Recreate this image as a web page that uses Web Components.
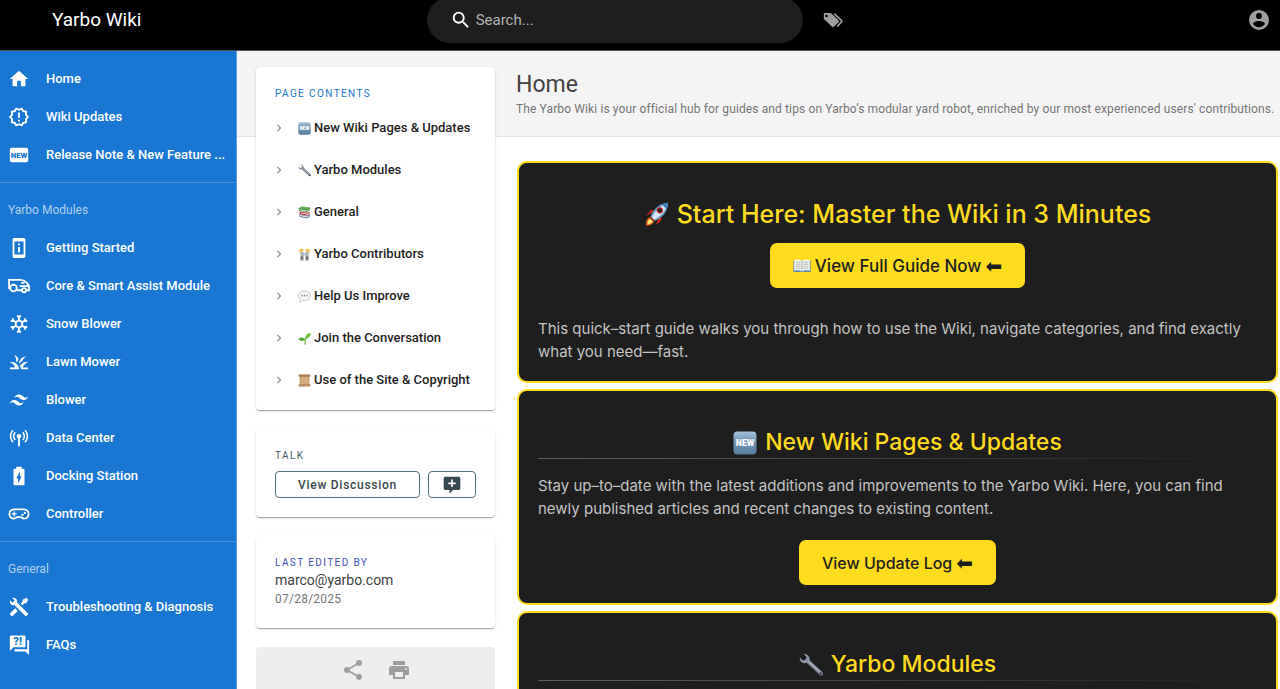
<!DOCTYPE html>
<html lang="en">
<head>
<meta charset="utf-8">
<title>Home | Yarbo Wiki</title>
<meta name="viewport" content="width=device-width, initial-scale=1">
<style>
  body { margin: 0; font-family: Roboto, "Liberation Sans", sans-serif; }
</style>
</head>
<body>
<wiki-app></wiki-app>

<script>
const ICONS = {
  home: '<path d="M10,20V14H14V20H19V12H22L12,3L2,12H5V20H10Z"/>',
  alert: '<path fill-rule="evenodd" d="M23,12L20.56,14.78L20.9,18.46L17.29,19.28L15.4,22.46L12,21L8.6,22.47L6.71,19.29L3.1,18.47L3.44,14.78L1,12L3.44,9.21L3.1,5.53L6.71,4.72L8.6,1.54L12,3L15.4,1.54L17.29,4.72L20.9,5.54L20.56,9.22L23,12M20.33,12L18.5,9.89L18.74,7.1L16,6.5L14.58,4.07L12,5.18L9.42,4.07L8,6.5L5.26,7.09L5.5,9.88L3.67,12L5.5,14.1L5.26,16.9L8,17.5L9.42,19.93L12,18.81L14.58,19.92L16,17.5L18.74,16.89L18.5,14.1L20.33,12M11,15H13V17H11V15M11,7H13V13H11V7"/>',
  news: '<rect x="2" y="4" width="20" height="16" rx="2"/><text x="12" y="15.2" text-anchor="middle" font-family="Roboto" font-weight="900" font-size="8.5" fill="#1976d2">NEW</text>',
  phone: '<path fill-rule="evenodd" d="M17,19V5H7V19H17M17,1A2,2 0 0,1 19,3V21A2,2 0 0,1 17,23H7C5.89,23 5,22.1 5,21V3C5,1.89 5.89,1 7,1H17M11,7H13V9H11V7M11,11H13V17H11V11Z"/>',
  van: '<g fill="none" stroke="currentColor" stroke-width="2"><path d="M1.2 15.5V5.4H13.5C18.5 5.4 23 10 23 13.6V16.6H20.5M9.5 16.6H14.6"/><circle cx="6" cy="14.2" r="3.6"/><circle cx="17.5" cy="16.6" r="2.2"/><path d="M12.6 12.2H22.6M14.5 8.6H18" stroke-width="1.8"/></g>',
  snow: '<path fill-rule="evenodd" d="M20.79,13.95L18.46,14.57L16.46,13.44V10.56L18.46,9.43L20.79,10.05L21.31,8.12L19.54,7.65L20,5.88L18.07,5.36L17.45,7.69L15.45,8.82L13,7.38V5.12L14.71,3.41L13.29,2L12,3.29L10.71,2L9.29,3.41L11,5.12V7.38L8.5,8.82L6.5,7.69L5.92,5.36L4,5.88L4.47,7.65L2.7,8.12L3.22,10.05L5.55,9.43L7.55,10.56V13.45L5.55,14.58L3.22,13.96L2.7,15.89L4.47,16.36L4,18.12L5.93,18.64L6.55,16.31L8.55,15.18L11,16.62V18.88L9.29,20.59L10.71,22L12,20.71L13.29,22L14.7,20.59L13,18.88V16.62L15.5,15.17L17.5,16.3L18.12,18.63L20,18.12L19.53,16.35L21.3,15.88L20.79,13.95M9.5,10.56L12,9.11L14.5,10.56V13.44L12,14.89L9.5,13.44V10.56Z"/>',
  grass: '<path d="M12,20H2V18H7.75C7,15.19 4.81,12.99 2,12.26C2.64,12.1 3.31,12 4,12C8.42,12 12,15.58 12,20M22,12.26C21.36,12.1 20.69,12 20,12C17.07,12 14.5,13.58 13.12,15.93C13.41,16.59 13.65,17.28 13.79,18C13.92,18.65 14,19.32 14,20H22V18H16.24C17,15.19 19.19,12.99 22,12.26M15.64,11C16.42,8.93 17.87,7.18 19.73,6C15.44,6.16 12,9.67 12,14C12.95,12.75 14.2,11.72 15.64,11M11.42,8.85C10.58,6.66 8.88,4.89 6.7,4C8.14,5.86 9,8.18 9,10.71C9,10.92 8.97,11.12 8.96,11.32C9.39,11.56 9.79,11.84 10.18,12.14C10.39,10.96 10.83,9.85 11.42,8.85Z"/>',
  wind: '<path d="M12,6C9.33,6 7.67,7.33 7,10C8,8.67 9.17,8.17 10.5,8.5C11.26,8.69 11.81,9.24 12.41,9.85C13.39,10.85 14.5,12 17,12C19.67,12 21.33,10.67 22,8C21,9.33 19.83,9.83 18.5,9.5C17.74,9.31 17.2,8.76 16.59,8.15C15.61,7.15 14.5,6 12,6M7,12C4.33,12 2.67,13.33 2,16C3,14.67 4.17,14.17 5.5,14.5C6.26,14.69 6.8,15.24 7.41,15.85C8.39,16.85 9.5,18 12,18C14.67,18 16.33,16.67 17,14C16,15.33 14.83,15.83 13.5,15.5C12.74,15.31 12.2,14.76 11.59,14.15C10.61,13.15 9.5,12 7,12Z"/>',
  antenna: '<path d="M12 7.5C12.69 7.5 13.27 7.73 13.76 8.2S14.5 9.27 14.5 10C14.5 11.05 14 11.81 13 12.28V21H11V12.28C10 11.81 9.5 11.05 9.5 10C9.5 9.27 9.76 8.67 10.24 8.2S11.31 7.5 12 7.5M16.69 5.3C17.94 6.55 18.61 8.11 18.7 10C18.7 11.8 18.03 13.38 16.69 14.72L15.5 13.5C16.5 12.59 17 11.42 17 10C17 8.67 16.5 7.5 15.5 6.5L16.69 5.3M6.09 4.08C4.5 5.67 3.7 7.64 3.7 10S4.5 14.3 6.09 15.89L4.92 17.11C3 15.08 2 12.7 2 10C2 7.3 3 4.94 4.92 2.91L6.09 4.08M19.08 2.91C21 4.94 22 7.3 22 10C22 12.8 21 15.17 19.08 17.11L17.91 15.89C19.5 14.3 20.3 12.33 20.3 10S19.5 5.67 17.91 4.08L19.08 2.91M7.31 5.3L8.5 6.5C7.5 7.42 7 8.58 7 10C7 11.33 7.5 12.5 8.5 13.5L7.31 14.72C5.97 13.38 5.3 11.8 5.3 10C5.3 8.2 5.97 6.64 7.31 5.3Z"/>',
  battery: '<path fill-rule="evenodd" d="M16.67,4H15V2H9V4H7.33A1.33,1.33 0 0,0 6,5.33V20.66C6,21.4 6.6,22 7.33,22H16.67A1.33,1.33 0 0,0 18,20.67V5.33C18,4.6 17.4,4 16.67,4M11,20V14.5H9L13,7V12.5H15Z"/>',
  pad: '<path d="M6.5 7H17.5A5 5 0 0 1 17.5 17C15.8 17 15.3 15.4 13.8 15.4H10.2C8.7 15.4 8.2 17 6.5 17A5 5 0 0 1 6.5 7Z" fill="none" stroke="currentColor" stroke-width="2"/><path d="M6 9.3H7.4V11.2H9.3V12.6H7.4V14.5H6V12.6H4.1V11.2H6Z"/><circle cx="18.3" cy="10.8" r="1.2"/><circle cx="15.8" cy="13" r="1.2"/>',
  tools: '<path d="M21.71 20.29L20.29 21.71A1 1 0 0 1 18.88 21.71L7 9.85A3.81 3.81 0 0 1 6 10A4 4 0 0 1 2.22 4.7L4.76 7.24L5.29 6.71L6.71 5.29L7.24 4.76L4.7 2.22A4 4 0 0 1 10 6A3.81 3.81 0 0 1 9.85 7L21.71 18.88A1 1 0 0 1 21.71 20.29M2.29 18.88A1 1 0 0 0 2.29 20.29L3.71 21.71A1 1 0 0 0 5.12 21.71L10.59 16.25L7.76 13.42M20 2L16 4V6L13.83 8.17L15.83 10.17L18 8H20L22 4Z"/>',
  faq: '<path d="M3 1.5H18A1 1 0 0 1 19 2.5V13.5A1 1 0 0 1 18 14.5H6L2 18.5V2.5A1 1 0 0 1 3 1.5M21 6.5H22A1 1 0 0 1 23 7.5V23L19 19H8A1 1 0 0 1 7 18V16.5H21Z"/><text x="10.5" y="12.2" text-anchor="middle" font-family="Roboto" font-weight="900" font-size="12" fill="#1976d2">?!</text>',
  search: '<path fill-rule="evenodd" d="M9.5,3A6.5,6.5 0 0,1 16,9.5C16,11.11 15.41,12.59 14.44,13.73L14.71,14H15.5L20.5,19L19,20.5L14,15.5V14.71L13.73,14.44C12.59,15.41 11.11,16 9.5,16A6.5,6.5 0 0,1 3,9.5A6.5,6.5 0 0,1 9.5,3M9.5,5C7,5 5,7 5,9.5C5,12 7,14 9.5,14C12,14 14,12 14,9.5C14,7 12,5 9.5,5Z"/>',
  tags: '<path fill-rule="evenodd" d="M2 3.5H8.6A2 2 0 0 1 10 4.1L18.4 12.1A2 2 0 0 1 18.4 14.9L13.4 19.9A2 2 0 0 1 10.6 19.9L1.6 11.5A2 2 0 0 1 1 10V4.5A1 1 0 0 1 2 3.5M4.3 5.6A1.6 1.6 0 1 0 4.3 8.8A1.6 1.6 0 1 0 4.3 5.6"/><path d="M13.5 4.4L22 12.4A1.6 1.6 0 0 1 22 14.6L17 19.8" fill="none" stroke="currentColor" stroke-width="2"/>',
  account: '<path fill-rule="evenodd" d="M12 2A10 10 0 1 0 12 22A10 10 0 1 0 12 2M12 5A3 3 0 1 1 12 11A3 3 0 1 1 12 5M12 12.9C14.5 12.9 18 14 18 16C16.7 17.9 14.5 19.2 12 19.2S7.3 17.9 6 16C6 14 9.5 12.9 12 12.9"/>',
  chevron: '<path d="M8.59,16.58L13.17,12L8.59,7.41L10,6L16,12L10,18L8.59,16.58Z"/>',
  comment: '<path fill-rule="evenodd" d="M4 2H20A2 2 0 0 1 22 4V16A2 2 0 0 1 20 18H13L9 22.4V18H4A2 2 0 0 1 2 16V4A2 2 0 0 1 4 2M11 5.5V9H7.5V11H11V14.5H13V11H16.5V9H13V5.5Z"/>',
  share: '<path d="M18,16.08C17.24,16.08 16.56,16.38 16.04,16.85L8.91,12.7C8.96,12.47 9,12.24 9,12C9,11.76 8.96,11.53 8.91,11.3L15.96,7.19C16.5,7.69 17.21,8 18,8A3,3 0 0,0 21,5A3,3 0 0,0 18,2A3,3 0 0,0 15,5C15,5.24 15.04,5.47 15.09,5.7L8.04,9.81C7.5,9.31 6.79,9 6,9A3,3 0 0,0 3,12A3,3 0 0,0 6,15C6.79,15 7.5,14.69 8.04,14.19L15.16,18.34C15.11,18.55 15.08,18.77 15.08,19C15.08,20.61 16.39,21.91 18,21.91C19.61,21.91 20.92,20.61 20.92,19A2.92,2.92 0 0,0 18,16.08Z"/>',
  print: '<path fill-rule="evenodd" d="M18,3H6V7H18M19,12A1,1 0 0,1 18,11A1,1 0 0,1 19,10A1,1 0 0,1 20,11A1,1 0 0,1 19,12M16,19H8V14H16M19,8H5A3,3 0 0,0 2,11V17H6V21H18V17H22V11A3,3 0 0,0 19,8Z"/>',

  /* full-colour pictographs */
  eNew: '<defs><linearGradient id="g" x1="0" y1="0" x2="0" y2="1"><stop offset="0" stop-color="#a9c6dc"/><stop offset=".3" stop-color="#7d9fbd"/><stop offset="1" stop-color="#587c9f"/></linearGradient></defs><rect x=".5" y=".5" width="23" height="23" rx="4" fill="url(#g)"/><text x="12" y="15.3" text-anchor="middle" font-family="Roboto" font-weight="900" font-size="8.6" fill="#fff">NEW</text>',
  eWrench: '<path d="M8 7.5L22 20.5" stroke="#6f7785" stroke-width="4.2" stroke-linecap="round"/><path d="M8 7L21.5 19.6" stroke="#a9b0bb" stroke-width="1.8" stroke-linecap="round"/><path d="M4.5 .8L7.6 4L6.8 6.8L4 7.6L.8 4.6C.4 8 3 10.6 6.2 10.2L10.6 8.4C11.4 4.6 9 .6 4.5 .8Z" fill="#8c95a3"/><circle cx="21.6" cy="20.4" r="1.1" fill="#3b3438"/>',
  eBooks: '<path d="M2 15L17 18L22 15.5V20L17 23L3 20.5Z" fill="#5c79a8"/><path d="M4 16.8L17 19.6L21 17.6V19L17 21.3L4 19Z" fill="#e9e6dd"/><path d="M3 10L18 12.5L22 10.5V15L17 17.5L3 15Z" fill="#b92f35"/><path d="M5 11.8L18 14.2L22 12.5V14L18 16L5 13.6Z" fill="#f1ede2"/><path d="M1 4L8 1L23 3L22 8L17 11L2 9Z" fill="#3f8b3c"/><path d="M1 4L8 1L23 3L17 6Z" fill="#6fb45c"/><path d="M3 6L17 8.3L22 5.8V7L17 9.8L3 7.8Z" fill="#e8eadf"/>',
  ePeople: '<g fill="#f2b93b"><circle cx="7" cy="4" r="2.9"/><circle cx="17" cy="4" r="2.9"/><path d="M1.5 3L3.5 2.6L5 8L3.4 9ZM22.5 3L20.5 2.6L19 8L20.6 9Z"/></g><path d="M4 7.5H10L12 10.5L14 7.5H20L19.5 15H13.8L12 12.5L10.2 15H4.5Z" fill="#aeb6bc"/><path d="M4.6 15H10V23H7.8L7.3 17.5L6.8 23H4.6ZM14 15H19.4V23H17.2L16.7 17.5L16.2 23H14Z" fill="#6a6f75"/>',
  eTalk: '<path d="M12 1.5C18.5 1.5 23 5.2 23 10.8S18.5 20 12 20C10.7 20 9.3 19.8 8.2 19.5C6.6 21.2 4.4 22.6 2.6 22.4C4 21 4.4 19.3 4.2 17.6C2.2 16 1 13.6 1 10.8C1 5.2 5.5 1.5 12 1.5Z" fill="#f3f3f4" stroke="#b4b4b8" stroke-width="1.2"/><g fill="#77777c"><circle cx="7.4" cy="10.8" r="1.4"/><circle cx="12" cy="10.8" r="1.4"/><circle cx="16.6" cy="10.8" r="1.4"/></g>',
  eSprout: '<path d="M13 22.5C12.6 17 13 13 15.5 9.5" stroke="#7cb342" stroke-width="2.2" fill="none" stroke-linecap="round"/><path d="M13.8 12.5C13.8 5 17 2.6 23.5 2C23.6 8.6 20.4 12 13.8 12.5Z" fill="#6fbf3a"/><path d="M13.5 14C9.5 9 5 8.6 .5 13.5C4.5 17.4 9.6 17.6 13.5 14Z" fill="#56a532"/>',
  eScroll: '<path d="M3 3H21V21H3Z" fill="#c49a6c"/><path d="M5 5H19V19H5Z" fill="#d3ab7d"/><rect x="1" y="1" width="22" height="4" rx="1.5" fill="#a97c50"/><rect x="1" y="19" width="22" height="4" rx="1.5" fill="#b68a5d"/>',
  eRocket: '<path d="M7.4 10.4L10.6 8.2L6.6 7.8L2 13.4ZM13.8 16.2L16.4 13L16.6 17.4L11.2 22.4Z" fill="#d9281c"/><path d="M2.2 22.6C1.4 18.8 3 15.4 6.6 14L10.2 17.2C9.4 20.4 6.2 22.8 2.2 22.6Z" fill="#f26a1b"/><path d="M3.4 21.4C3.2 18.6 4.6 16.6 7 15.6L8.8 17.2C8 19.8 6 21.2 3.4 21.4Z" fill="#ffe27a"/><path d="M6.4 14.2C8.6 7.4 14 1.8 23.2 .8C22.8 9.6 17.4 15.6 10.6 18Z" fill="#6fa3cf"/><path d="M7.6 14.8C10.6 8.6 15.4 4 23.2 .8C20.8 8.4 16.4 13.4 9.8 17Z" fill="#dbe8f2"/><path d="M17 2.4C19 1.4 21 1 23.2 .8C23.1 3 22.6 5 21.8 6.8Z" fill="#3f7fb8"/><circle cx="15.2" cy="8" r="3" fill="#b5201a"/><circle cx="15.2" cy="8" r="1.8" fill="#17252f"/><path d="M5.4 14.4L9.8 18.4" stroke="#8f1d16" stroke-width="1.6"/>',
  eBook: '<path d="M.5 5H23.5V20H.5Z" fill="#5d87ad"/><path d="M1.6 4C5.5 2.8 9.5 3.2 12 5.2C14.5 3.2 18.5 2.8 22.4 4V18.2C18.5 17.2 14.5 17.6 12 19.4C9.5 17.6 5.5 17.2 1.6 18.2Z" fill="#f4f4ef"/><path d="M12 5.2V19.4" stroke="#8d9399" stroke-width="1"/><path d="M3.6 7H10M3.6 9.6H10M3.6 12.2H10M3.6 14.8H10M14 7H20.4M14 9.6H20.4M14 12.2H20.4M14 14.8H20.4" stroke="#9aa0a6" stroke-width=".9"/>'
};

function define(name, html, setup) {
  const template = document.createElement('template');
  template.innerHTML = html;
  customElements.define(name, class extends HTMLElement {
    constructor() {
      super();
      this.attachShadow({ mode: 'open' }).append(template.content.cloneNode(true));
    }
    connectedCallback() { if (setup) setup(this, this.shadowRoot); }
  });
}

/* Icon: name picks the drawing, --size sets its box. */
customElements.define('wiki-icon', class extends HTMLElement {
  static observedAttributes = ['name'];
  constructor() {
    super();
    this.attachShadow({ mode: 'open' }).innerHTML = `
      <style>
        :host { display: inline-block; flex: none; width: var(--size, 22px); height: var(--size, 22px); }
        svg { display: block; width: 100%; height: 100%; fill: currentColor; }
      </style>
      <svg viewBox="0 0 24 24" aria-hidden="true"></svg>`;
  }
  attributeChangedCallback(attribute, before, name) {
    this.shadowRoot.querySelector('svg').innerHTML = ICONS[name] || '';
  }
});

define('wiki-topbar', `
  <style>
    :host { display: grid; grid-template-columns: repeat(3, 1fr); grid-template-rows: 40px; align-items: center; box-sizing: border-box;
      height: 51px; border-bottom: 1px solid #555; background: #000; color: #fff; overflow: hidden; }
    .brand { padding-left: 52px; font-size: 19px; line-height: 24px; color: #fff; text-decoration: none; }
    .middle { display: flex; align-items: center; }
    label { flex: 1; display: flex; align-items: center; gap: 4px; height: 46px; padding: 0 23px; border-radius: 23px; background: #1e1e1e; }
    input { flex: 1; min-width: 0; border: 0; padding: 0; outline: 0; background: none; color: #fff; font: 15px/22px Roboto, sans-serif; }
    input::placeholder { color: #b4b4b4; opacity: 1; }
    button { display: flex; border: 0; padding: 0; background: none; color: #9e9e9e; }
    .tags { margin: 0 10px 0 20px; }
    .account { justify-self: end; margin-right: 9px; }
  </style>
  <a class="brand" href="#">Yarbo Wiki</a>
  <div class="middle">
    <label><wiki-icon name="search"></wiki-icon><input type="search" placeholder="Search..." aria-label="Search"></label>
    <button class="tags" aria-label="Browse by tags"><wiki-icon name="tags" style="--size:20px"></wiki-icon></button>
  </div>
  <button class="account" aria-label="Account"><wiki-icon name="account" style="--size:24px"></wiki-icon></button>`);

define('nav-item', `
  <style>
    :host { display: block; }
    a { display: flex; align-items: center; gap: 16px; height: 38px; padding: 0 8px; color: #fff; text-decoration: none; font-size: 13px; font-weight: 500; line-height: 18px; white-space: nowrap; }
  </style>
  <a href="#"><wiki-icon></wiki-icon><span><slot></slot></span></a>`,
  (el, root) => root.querySelector('wiki-icon').setAttribute('name', el.getAttribute('icon')));

define('nav-group', `
  <style>
    :host { display: block; padding: 8px 0; }
    :host(:not(:first-child)) { border-top: 1px solid #4a91db; }
    h2 { margin: 0; padding-left: 8px; font-size: 12px; font-weight: 400; line-height: 38px; color: #b0d0f0; }
    h2:empty { display: none; }
  </style>
  <h2></h2><slot></slot>`,
  (el, root) => { root.querySelector('h2').textContent = el.getAttribute('heading') || ''; });

define('wiki-sidebar', `
  <style>
    :host { display: block; box-sizing: border-box; padding-top: 1px; background: #1976d2; border-right: 1px solid #5e9fe0; overflow: auto; scrollbar-width: none; }
  </style>
  <nav aria-label="Site">
    <nav-group>
      <nav-item icon="home">Home</nav-item>
      <nav-item icon="alert">Wiki Updates</nav-item>
      <nav-item icon="news">Release Note &amp; New Feature ...</nav-item>
    </nav-group>
    <nav-group heading="Yarbo Modules">
      <nav-item icon="phone">Getting Started</nav-item>
      <nav-item icon="van">Core &amp; Smart Assist Module</nav-item>
      <nav-item icon="snow">Snow Blower</nav-item>
      <nav-item icon="grass">Lawn Mower</nav-item>
      <nav-item icon="wind">Blower</nav-item>
      <nav-item icon="antenna">Data Center</nav-item>
      <nav-item icon="battery">Docking Station</nav-item>
      <nav-item icon="pad">Controller</nav-item>
    </nav-group>
    <nav-group heading="General">
      <nav-item icon="tools">Troubleshooting &amp; Diagnosis</nav-item>
      <nav-item icon="faq">FAQs</nav-item>
    </nav-group>
  </nav>`);

define('side-card', `
  <style>
    :host { display: block; padding: 19px; border-radius: 4px; background: #fff; color: #1976d2;
      box-shadow: 0 2px 1px -1px rgba(0,0,0,.2), 0 1px 1px rgba(0,0,0,.14), 0 1px 3px rgba(0,0,0,.12); }
    h2 { margin: 0; font-size: 10px; font-weight: 400; line-height: 16px; letter-spacing: .14em; text-transform: uppercase; }
  </style>
  <h2></h2><slot></slot>`,
  (el, root) => { root.querySelector('h2').textContent = el.getAttribute('heading'); });

define('toc-item', `
  <style>
    :host { display: block; }
    a { display: flex; align-items: center; height: 42px; color: #1e1e1e; text-decoration: none; font-size: 13px; font-weight: 500; line-height: 18px; white-space: nowrap; }
    .chev { --size: 14px; margin: 0 12px 0 -3px; color: #8a8a8a; }
    .emoji { --size: 13px; margin-right: 3px; }
  </style>
  <a href="#"><wiki-icon class="chev" name="chevron"></wiki-icon><wiki-icon class="emoji"></wiki-icon><slot></slot></a>`,
  (el, root) => root.querySelector('.emoji').setAttribute('name', el.getAttribute('emoji')));

define('page-aside', `
  <style>
    :host { display: flex; flex-direction: column; gap: 19px; }
    .toc { padding-bottom: 9px; }
    .toc nav { margin-top: 5px; }
    .talk { color: #455a64; }
    .talk div { display: flex; gap: 8px; margin-top: 7px; }
    .talk button { display: flex; align-items: center; justify-content: center; box-sizing: border-box; height: 27px; width: 48px; padding: 0;
      border: 1px solid #546e7a; border-radius: 4px; background: none; color: #37474f; font: 500 12px/16px Roboto, sans-serif; letter-spacing: .06em; }
    .talk button:first-child { flex: 1; }
    .edited { color: #3f51b5; }
    p { margin: 0; }
    .who { font-size: 14px; line-height: 18px; color: #424242; }
    .when { font-size: 12px; line-height: 20px; letter-spacing: .02em; color: #757575; }
    .tools { display: flex; justify-content: center; gap: 22px; padding: 11px; border-radius: 4px; background: #eee; }
    .tools button { display: flex; border: 0; padding: 0; background: none; color: #9e9e9e; --size: 24px; }
  </style>
  <side-card class="toc" heading="Page Contents">
    <nav aria-label="Page contents">
      <toc-item emoji="eNew">New Wiki Pages &amp; Updates</toc-item>
      <toc-item emoji="eWrench">Yarbo Modules</toc-item>
      <toc-item emoji="eBooks">General</toc-item>
      <toc-item emoji="ePeople">Yarbo Contributors</toc-item>
      <toc-item emoji="eTalk">Help Us Improve</toc-item>
      <toc-item emoji="eSprout">Join the Conversation</toc-item>
      <toc-item emoji="eScroll">Use of the Site &amp; Copyright</toc-item>
    </nav>
  </side-card>
  <side-card class="talk" heading="Talk">
    <div><button>View Discussion</button><button aria-label="New comment"><wiki-icon name="comment" style="--size:20px"></wiki-icon></button></div>
  </side-card>
  <side-card class="edited" heading="Last edited by">
    <p class="who">marco@yarbo.com</p>
    <p class="when">07/28/2025</p>
  </side-card>
  <div class="tools">
    <button aria-label="Share"><wiki-icon name="share"></wiki-icon></button>
    <button aria-label="Print"><wiki-icon name="print"></wiki-icon></button>
  </div>`);

define('page-heading', `
  <style>
    :host { display: block; }
    h1 { margin: 0; font-size: 23px; font-weight: 400; line-height: 31px; color: #424242; }
    p { margin: 0; font-size: 12px; line-height: 18px; letter-spacing: .01em; color: #757575; }
  </style>
  <h1><slot name="title"></slot></h1><p><slot></slot></p>`);

define('yellow-button', `
  <style>
    :host { display: block; text-align: center; font-size: 16px; }
    :host([large]) { font-size: 17px; }
    a { display: inline-flex; align-items: center; gap: 4px; height: 45px; padding: 0 23px; border-radius: 7px; background: #ffdb1e; color: #1e1e1e;
      text-decoration: none; font-family: Inter, "DejaVu Sans", sans-serif; font-weight: 500; line-height: 24px; --size: 18px; vertical-align: top; }
    .arrow { font-family: "DejaVu Sans", sans-serif; font-size: 20px; }
  </style>
  <a href="#"><slot></slot><span class="arrow">⬅</span></a>`);

define('guide-card', `
  <style>
    :host { display: block; padding: 36px 19px 18px; border: 2px solid #ffdb1e; border-radius: 10px; background: #1e1e1e; color: #c4c4c4;
      font-family: Inter, "Liberation Sans", sans-serif; }
    h2 { display: flex; align-items: center; justify-content: center; gap: 8px; margin: 0; font-size: 25px; font-weight: 500; line-height: 31px; color: #ffdb1e; --size: 25px; }
    hr { height: 1px; margin: 0; border: 0; background: transparent; }
    :host([ruled]) hr { background: linear-gradient(90deg, #616161, transparent); }
    :host([ruled]) h2 { font-size: 23px; --size: 24px; }
    ::slotted(p) { margin: 15px 0 20px; font-size: 15px; line-height: 23px; }
    ::slotted(p:last-child) { margin: 29px 0 0; }
    ::slotted(yellow-button:first-child) { margin-top: 12px; }
  </style>
  <h2><wiki-icon></wiki-icon><span></span></h2><hr><slot></slot>`,
  (el, root) => {
    root.querySelector('wiki-icon').setAttribute('name', el.getAttribute('emoji'));
    root.querySelector('span').textContent = el.getAttribute('heading');
  });

define('page-content', `
  <style>
    :host { display: flex; flex-direction: column; gap: 6px; }
  </style>
  <guide-card emoji="eRocket" heading="Start Here: Master the Wiki in 3 Minutes">
    <yellow-button large><wiki-icon name="eBook"></wiki-icon>View Full Guide Now</yellow-button>
    <p>This quick–start guide walks you through how to use the Wiki, navigate categories, and find exactly what you need—fast.</p>
  </guide-card>
  <guide-card ruled emoji="eNew" heading="New Wiki Pages &amp; Updates">
    <p>Stay up–to–date with the latest additions and improvements to the Yarbo Wiki. Here, you can find newly published articles and recent changes to existing content.</p>
    <yellow-button>View Update Log</yellow-button>
  </guide-card>
  <guide-card ruled emoji="eWrench" heading="Yarbo Modules"></guide-card>`);

define('wiki-page', `
  <style>
    :host { display: grid; grid-template-columns: 19px 239px minmax(0, 1fr); grid-template-rows: minmax(86px, auto) auto; overflow: auto; scrollbar-width: none; background: #fff; }
    .band { grid-column: 1 / -1; grid-row: 1; box-sizing: border-box; border-bottom: 1px solid #e4e4e4; background: #f4f4f4; }
    .column { grid-column: 2; grid-row: 1 / 3; height: 0; padding-top: 16px; z-index: 1; }
    page-heading { grid-column: 3; grid-row: 1; padding: 18px 0 0 21px; }
    page-content { grid-column: 3; grid-row: 2; margin: 24px 2px 24px 22px; }
  </style>
  <div class="band"></div>
  <div class="column"><page-aside></page-aside></div>
  <page-heading><span slot="title">Home</span>The Yarbo Wiki is your official hub for guides and tips on Yarbo’s modular yard robot, enriched by our most experienced users' contributions.</page-heading>
  <page-content></page-content>`);

define('wiki-app', `
  <style>
    :host { display: grid; grid-template-columns: 237px minmax(0, 1fr); grid-template-rows: auto minmax(0, 1fr); height: 100vh; }
    wiki-topbar { grid-column: 1 / -1; }
  </style>
  <wiki-topbar></wiki-topbar>
  <wiki-sidebar></wiki-sidebar>
  <wiki-page></wiki-page>`);
</script>
</body>
</html>
